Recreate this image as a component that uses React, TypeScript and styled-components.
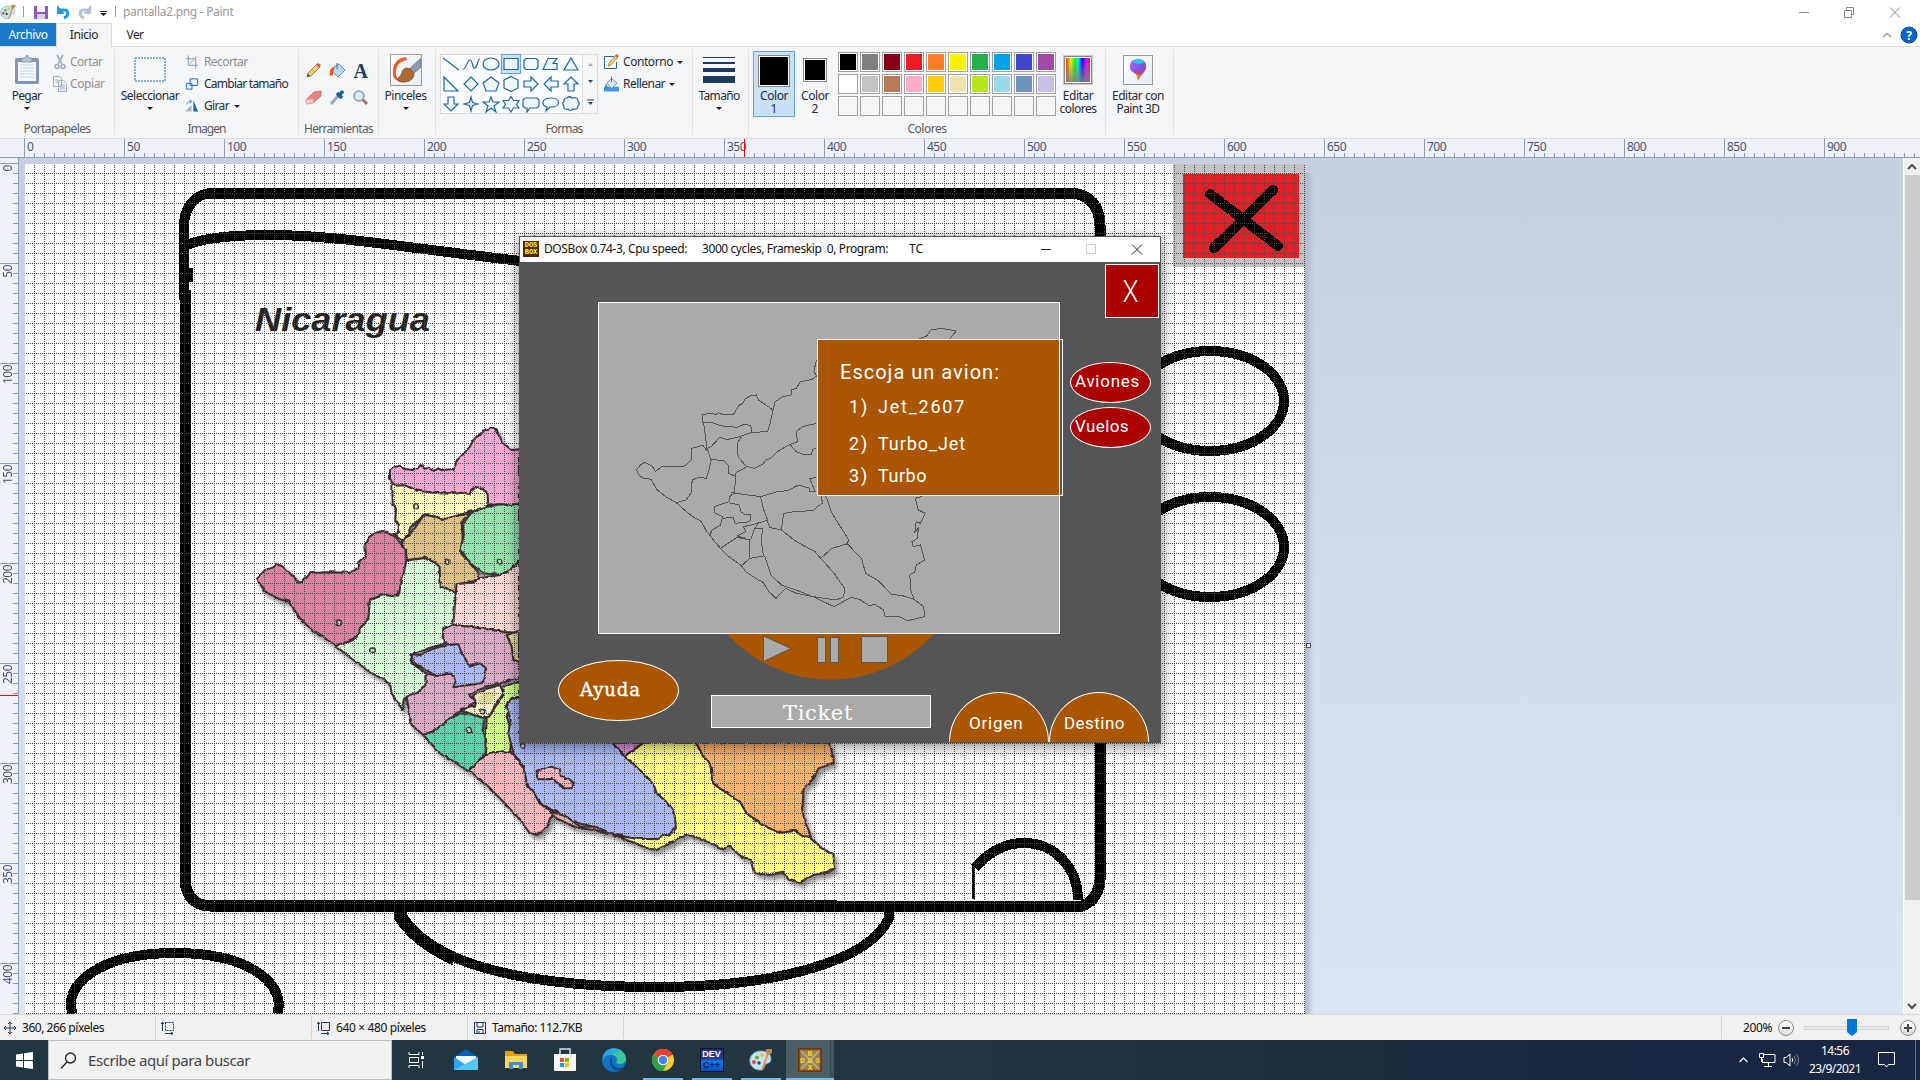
import React, { useLayoutEffect, useRef, useState } from "react";
import styled, { createGlobalStyle, css } from "styled-components";

const Global = createGlobalStyle`
  * { box-sizing: border-box; }
  html, body { margin: 0; padding: 0; overflow: hidden; }
  body { font: 12px/16px "Noto Sans", "Open Sans", sans-serif; color: #262b38; }
  svg { display: block; flex: none; }
`;

/* Spreads or tightens a label so that it takes exactly the given width. */
const FitBox = styled.span`
  display: inline-block;
  white-space: pre;
  flex: none;
`;
const Fit = ({ w, children }: { w: number; children: string }) => {
  const ref = useRef<HTMLSpanElement>(null);
  const [gap, setGap] = useState(0);
  useLayoutEffect(() => {
    if (ref.current) setGap((w + 1 - ref.current.getBoundingClientRect().width) / children.length);
  }, [w, children]);
  return <FitBox ref={ref} style={{ letterSpacing: gap }}>{children}</FitBox>;
};

const App_ = styled.div`
  position: relative;
  width: 1920px;
  height: 1080px;
  display: flex;
  flex-direction: column;
  background: #fff;
  overflow: hidden;
`;

/* ---------- title bar and tabs ---------- */
const TitleBar = styled.div`
  height: 23px;
  display: flex;
  align-items: center;
  color: #999;
`;
const QuickAccess = styled.div`
  width: 123px;
  height: 23px;
  display: flex;
  align-items: center;
`;
const Spacer = styled.div`flex: 1;`;
const TabBar = styled.div`
  height: 24px;
  display: flex;
  align-items: center;
  border-bottom: 1px solid #dadbdc;
  color: #222;
`;
const Tab = styled.div<{ $w: number; $kind?: "file" | "active" }>`
  width: ${(p) => p.$w}px;
  height: 24px;
  display: flex;
  justify-content: center;
  align-items: center;
  ${(p) => p.$kind === "file" && css`height: 23px; align-self: flex-start; background: #1979ca; color: #fff;`}
  ${(p) => p.$kind === "active" && css`background: #f5f6f7; border: 1px solid #dadbdc; border-bottom: 0;`}
`;

/* ---------- ribbon ---------- */
const Ribbon = styled.div`
  height: 92px;
  display: flex;
  padding: 2px 0 3px;
  background: #f5f6f7;
  border-bottom: 1px solid #dadbdc;
`;
const Group = styled.div<{ $w: number }>`
  width: ${(p) => p.$w}px;
  border-right: 1px solid #e2e3e4;
  display: flex;
  flex-direction: column;
`;
const GroupBody = styled.div<{ $l?: number }>`
  height: 72px;
  display: flex;
  padding-left: ${(p) => p.$l ?? 0}px;
`;
const GroupLabel = styled.div`
  height: 14px;
  line-height: 14px;
  padding-top: 1px;
  color: #5c5c5c;
  text-align: center;
`;
const Big = styled.div<{ $w: number; $on?: boolean; $l?: number }>`
  width: ${(p) => p.$w}px;
  height: ${(p) => (p.$on ? 66 : 70)}px;
  margin-top: ${(p) => (p.$on ? 2 : 0)}px;
  margin-left: ${(p) => p.$l ?? 0}px;
  padding-top: ${(p) => (p.$on ? 0 : 2)}px;
  display: flex;
  flex-direction: column;
  align-items: center;
  line-height: 13px;
  ${(p) => p.$on && css`background: #c9e0f7; border: 1px solid #62a2e4; padding-top: 0;`}
`;
const BigIcon = styled.div<{ $h?: number }>`
  height: ${(p) => p.$h ?? 38}px;
  display: flex;
  align-items: center;
`;
const Rows = styled.div<{ $l?: number }>`
  display: flex;
  flex-direction: column;
  padding: 2px 0 0 ${(p) => p.$l ?? 0}px;
`;
const Row = styled.div<{ $off?: boolean; $gap?: number }>`
  height: 22px;
  display: flex;
  align-items: center;
  gap: ${(p) => p.$gap ?? 3}px;
  color: ${(p) => (p.$off ? "#8f8f8f" : "#262b38")};
  svg { opacity: ${(p) => (p.$off ? 0.75 : 1)}; }
`;
const Caret = styled.span<{ $m?: number }>`
  width: 0;
  height: 0;
  margin-top: ${(p) => p.$m ?? 0}px;
  border: 3px solid transparent;
  border-top-color: #1e1e1e;
  border-bottom: 0;
`;
const Tools = styled.div`
  display: grid;
  grid-template-columns: repeat(3, 23.5px);
  grid-template-rows: 27px 27px;
  place-items: center;
  padding-top: 8px;
`;
const Gallery = styled.div`
  width: 158px;
  height: 60px;
  margin-top: 5px;
  display: flex;
  background: #fbfcfd;
  border: 1px solid #d9dbdd;
`;
const ShapeGrid = styled.div`
  display: grid;
  width: 141px;
  grid-template-columns: repeat(7, 20px);
  grid-auto-rows: 20px;
  margin-top: -1px;
`;
const ShapeCell = styled.div<{ $on: boolean }>`
  display: grid;
  place-items: center;
  ${(p) => p.$on && css`background: #c9e0f7; box-shadow: inset 0 0 0 1px #62a2e4;`}
`;
const GalleryScroll = styled.div`
  flex: 1;
  display: flex;
  flex-direction: column;
  justify-content: space-around;
  align-items: center;
  border-left: 1px solid #d9dbdd;
  background: #f6f7f8;
`;
const Bars = styled.div`
  width: 32px;
  display: flex;
  flex-direction: column;
  gap: 4px;
`;
const Bar = styled.div<{ $h: number }>`
  height: ${(p) => p.$h}px;
  background: #1e395b;
`;
const ColorBox = styled.div<{ $s: number }>`
  width: ${(p) => p.$s}px;
  height: ${(p) => p.$s}px;
  background: #000;
  border: 1px solid #868686;
  box-shadow: inset 0 0 0 1px #fff;
`;
const Palette = styled.div`
  display: grid;
  grid-template-columns: repeat(10, 20px);
  grid-auto-rows: 20px;
  gap: 2px;
  padding: 3px 4px 0 5px;
`;
const Swatch = styled.div<{ $c?: string }>`
  border: 1px solid #a0a0a0;
  background: ${(p) => p.$c ?? "#f5f6f7"};
  ${(p) => p.$c && css`box-shadow: inset 0 0 0 1px #fff;`}
`;
const Rainbow = styled.div`
  width: 28px;
  height: 28px;
  border: 1px solid #888;
  outline: 1px solid #ccc;
  box-shadow: inset 0 0 0 1px #fff;
  background: linear-gradient(rgba(128,128,128,0), rgba(128,128,128,.9)), linear-gradient(90deg, #f00, #f80 12%, #ff0 22%, #0f0 38%, #0ff 50%, #00f 66%, #f0f 84%, #f00);
`;
const Framed = styled.div<{ $s: number }>`
  width: ${(p) => p.$s}px;
  height: ${(p) => p.$s}px;
  display: grid;
  place-items: center;
  border: 1px solid #9a9a9a;
  background: linear-gradient(135deg, #fff, #e4ecf0);
`;

/* ---------- rulers and work area ---------- */
const HRuler = styled.div`
  height: 19px;
  flex: none;
  display: flex;
  padding-left: 24px;
  background: #f0f1f8;
  border-bottom: 1px solid #8e9cb4;
  position: relative;
  overflow: hidden;
`;
const HSeg = styled.div`
  flex: none;
  width: 100px;
  height: 18px;
  padding-left: 2px;
  color: #44546f;
  border-left: 1px solid #8e9cb4;
  background: repeating-linear-gradient(90deg, transparent 0 9px, #8e9cb4 9px 10px) 0 14px / 100% 4px no-repeat;
`;
const HMark = styled.div`
  position: absolute;
  left: 744px;
  top: 0;
  width: 1px;
  height: 19px;
  background: #f00;
`;
const Body = styled.div`
  height: 856px;
  flex: none;
  display: flex;
  overflow: hidden;
`;
const VRuler = styled.div`
  width: 19px;
  padding-top: 5px;
  background: #f0f1f8;
  border-right: 1px solid #8e9cb4;
  position: relative;
  overflow: hidden;
`;
const VSeg = styled.div`
  height: 100px;
  width: 18px;
  color: #44546f;
  border-top: 1px solid #8e9cb4;
  background: repeating-linear-gradient(180deg, transparent 0 9px, #8e9cb4 9px 10px) 13px 0 / 5px 100% no-repeat;
`;
const VNum = styled.div`
  writing-mode: vertical-rl;
  transform: rotate(180deg);
  line-height: 16px;
  letter-spacing: -0.5px;
  padding-bottom: 1px;
`;
const VMark = styled(HMark)`
  left: 0;
  top: 537px;
  width: 18px;
  height: 1px;
`;
const Stage = styled.div`
  flex: 1;
  display: flex;
  padding: 6px 0 0 6px;
  background: linear-gradient(#c5cfe0, #dce6f2);
`;
const Edge = styled.div`
  width: 9px;
  margin-top: 9px;
  background: linear-gradient(90deg, #a9b7cd 0, rgba(169,183,205,0));
  display: flex;
  align-items: flex-start;
  padding: 470px 0 0 1px;
`;
const Handle = styled.div`
  width: 5px;
  height: 5px;
  background: #fff;
  border: 1px solid #555;
`;
const Scroll = styled.div`
  width: 17px;
  display: flex;
  flex-direction: column;
  align-items: center;
  justify-content: space-between;
  background: #f0f0f0;
  border-left: 1px solid #fff;
`;
const Thumb = styled.div`
  width: 15px;
  height: 725px;
  margin-bottom: auto;
  background: #cdcdcd;
`;
const ScrollBtn = styled.div`
  height: 17px;
  display: grid;
  place-items: center;
`;

/* ---------- status bar ---------- */
const Status = styled.div`
  height: 26px;
  flex: none;
  display: flex;
  align-items: center;
  background: #f0f0f0;
  border-top: 1px solid #d7d7d7;
  color: #111;
`;
const Cell = styled.div<{ $w: number; $g?: number; $l?: number }>`
  width: ${(p) => p.$w}px;
  height: 23px;
  padding-left: ${(p) => p.$l ?? 4}px;
  display: flex;
  align-items: center;
  gap: ${(p) => p.$g ?? 5}px;
  border-right: 1px solid #d4d4d4;
`;
const Zoom = styled.div`
  width: 199px;
  height: 23px;
  padding-left: 21px;
  display: flex;
  align-items: center;
  border-left: 1px solid #d4d4d4;
`;
const Round = styled.div<{ $l?: number }>`
  width: 16px;
  height: 16px;
  margin-left: ${(p) => p.$l ?? 0}px;
  border-radius: 50%;
  border: 1px solid #888;
  background: linear-gradient(#fff, #ddd);
  display: grid;
  place-items: center;
`;
const Track = styled.div`
  width: 85px;
  height: 4px;
  margin: 0 11px 0 10px;
  padding-left: 42px;
  display: flex;
  align-items: center;
  background: #e7eaea;
  border: 1px solid #d6d6d6;
`;

/* ---------- taskbar ---------- */
const Taskbar = styled.div`
  height: 40px;
  flex: none;
  display: flex;
  align-items: center;
  color: #fff;
  background: linear-gradient(90deg, #21373f 0, #21363f 50%, #1d2d3f 72%, #1a2643 85%, #1a2744);
`;
const Start = styled.div`
  width: 48px;
  display: grid;
  place-items: center;
`;
const Search = styled.div`
  width: 344px;
  height: 40px;
  padding-left: 11px;
  display: flex;
  align-items: center;
  gap: 11px;
  font-size: 15px;
  color: #444;
  background: #f1f1f1;
  border: 1px solid #bfbfbf;
`;
const TaskItem = styled.div<{ $run?: boolean; $on?: boolean; $w?: number }>`
  width: ${(p) => p.$w ?? 49}px;
  height: 40px;
  display: grid;
  place-items: center;
  background: ${(p) => (p.$on ? "linear-gradient(90deg, #4c5f67 0 44px, #35484f 44px 45px, #43565e 45px)" : "none")};
  ${(p) => p.$run && css`
    &::after { content: ""; width: ${p.$on ? 48 : 40}px; height: 2px; background: #76b9ed; align-self: end; grid-area: 1 / 1; }
  `}
  > svg, > div { grid-area: 1 / 1; }
`;
const DevIcon = styled.div`
  width: 24px;
  height: 24px;
  background: linear-gradient(#203070, #2a3f8a 45%, #0b7be8 55%, #0a50c0);
  border: 1px solid #0b1330;
  font: bold 9px/11px "Liberation Sans", sans-serif;
  text-align: center;
  span { display: block; color: #06204c; }
`;
const Tray = styled.div`
  width: 185px;
  height: 40px;
  display: flex;
  align-items: center;
  padding-left: 2px;
`;
const Clock = styled.div`
  width: 64px;
  margin: 0 10px 0 3px;
  display: flex;
  flex-direction: column;
  align-items: center;
  line-height: 18px;
`;
const Peek = styled.div`
  width: 1px;
  height: 40px;
  margin-left: 20px;
  background: #66708a;
`;

/* ---------- DOSBox window ---------- */
const DosWindow = styled.div`
  position: absolute;
  left: 519px;
  top: 236px;
  width: 642px;
  height: 507px;
  border: 1px solid #555;
  background: #555;
  box-shadow: 0 3px 14px 1px rgba(0, 0, 0, 0.45);
`;
const DosTitle = styled.div`
  height: 25px;
  padding: 0 0 1px 3px;
  display: flex;
  align-items: center;
  background: #fff;
  color: #111;
`;
const TitleText = styled.div<{ $l: number }>`margin-left: ${(p) => p.$l}px;`;
const Screen = styled.div`
  width: 640px;
  height: 480px;
  color: #fff;
  font-family: "Roboto", "Lato", sans-serif;
  overflow: hidden;
`;
const TopRow = styled.div`
  height: 372px;
  display: flex;
`;
const MapPanel = styled.div`
  position: relative;
  width: 462px;
  height: 332px;
  margin: 40px 0 0 78px;
  border: 1px solid #fff;
  background: #aaa;
`;
const Popup = styled.div`
  position: absolute;
  left: 218px;
  top: 36px;
  width: 246px;
  height: 157px;
  padding: 20px 0 0 22px;
  border: 1px solid #fff;
  background: linear-gradient(90deg, #a50 0 241px, #fff 241px 242px, #555 242px);
  line-height: 24px;
  font-size: 18px;
`;
const Question = styled.div`
  height: 35px;
  font-size: 20px;
`;
const Option = styled.div<{ $h: number }>`
  height: ${(p) => p.$h}px;
  padding-left: 9px;
  display: flex;
  gap: 9px;
`;
const Side = styled.div`
  width: 100px;
  padding: 2px 1px 0 10px;
  display: flex;
  flex-direction: column;
`;
const CloseBox = styled.div`
  width: 54px;
  height: 54px;
  margin: 0 0 44px 35px;
  padding: 2px 3px 0 0;
  display: grid;
  place-items: center;
  font-size: 31px;
  font-weight: 300;
  background: #a00;
  border: 1px solid #fff;
  span { transform: scaleX(.85); }
`;
const RedOval = styled.div`
  width: 81px;
  height: 41px;
  margin-bottom: 4px;
  padding: 0 0 4px 4px;
  display: flex;
  align-items: center;
  font-size: 17px;
  background: #a00;
  border: 1px solid #fff;
  border-radius: 50%;
`;
const BottomRow = styled.div`
  height: 108px;
  display: flex;
`;
const HelpOval = styled.div`
  width: 121px;
  height: 61px;
  margin: 26px 32px 0 38px;
  padding: 0 0 2px 21px;
  display: flex;
  align-items: center;
  font: 18px "DejaVu Serif", serif;
  -webkit-text-stroke: 0.4px #fff;
  background: #a50;
  border: 1px solid #fff;
  border-radius: 50%;
`;
const Center = styled.div`
  width: 220px;
  margin-right: 18px;
`;
const Ticket = styled.div`
  height: 33px;
  margin-top: 16px;
  padding: 4px 0 0 71px;
  font: 21px/26px "DejaVu Serif", serif;
  background: #aaa;
  border: 1px solid #fff;
`;
const Arch = styled.div<{ $l: number }>`
  width: 100px;
  height: 50px;
  align-self: flex-end;
  padding: 18px 0 0 ${(p) => p.$l}px;
  font-size: 17px;
  line-height: 24px;
  background: #a50;
  border: 1px solid #fff;
  border-bottom: 0;
  border-radius: 50px 50px 0 0 / 50px 50px 0 0;
`;
const DosLogo = styled.div`
  width: 16px;
  height: 16px;
  font: bold 7px/7px "Liberation Mono", monospace;
  text-align: center;
  color: #ff3;
  padding-top: 1px;
  background: #522a08;
`;

/* ---------- icons ---------- */
const PaintIcon = ({ s = 18 }: { s?: number }) => (
  <svg width={s} height={s} viewBox="0 0 24 24">
    <path d="M1 14C0 8 5 3 12 3c6 0 10 3 10 8 0 4-3 4-5 5s-1 6-6 6C6 22 2 19 1 14z" fill="#c4e4f4" stroke="#7ba9c4" />
    <circle cx="5" cy="14" r="2" fill="#e2473c" /><circle cx="8" cy="9.500" r="2" fill="#5ab82f" />
    <circle cx="13" cy="7" r="2" fill="#f2c12e" /><circle cx="10" cy="15" r="1.700" fill="#1c4f6b" />
    <path d="M20 5l-6 17-2 1 1-3 5-15z" fill="#e8883c" /><path d="M17 1l6 0 0 4-4 2-2-2z" fill="#b98758" />
  </svg>
);
const Brush = () => (
  <svg width="30" height="30" viewBox="0 0 30 30">
    <path d="M15 2C5 3 1 10 2 20c1 5 5 7 9 6-7-2-7-9-5-14 2-4 5-6 10-7z" fill="#e5602a" />
    <path d="M30 3v9l-9 8-5-4z" fill="#8c9ab0" stroke="#4e5a70" strokeWidth=".6" />
    <path d="M15 13c4 0 7 3 8 6 0 5-5 9-13 8-4-1-4-3-2-5 3-1 2-8 7-9z" fill="#ad6b32" stroke="#704018" strokeWidth=".6" />
  </svg>
);
const blue = { fill: "none", stroke: "#1e66a5", strokeWidth: 1.2 };
const SHAPES = [
  "M1 3L17 15", "M1 14C4 15 5 5 8 5c3 0 2 9 5 8 3-1 2-9 5-9", "M1 9a8 6 0 1 0 16 0a8 6 0 1 0-16 0", "M2 3.500H16V14.500H2z",
  "M4 3.500h10l2 2v7l-2 2H4l-2-2v-7z", "M6 3.500h9l-4 5h4v6H1z", "M9 3l7 12H2z",
  "M2 2v14h14z", "M9 2l7 7-7 7-7-7z", "M9 2l8 6-3 8H4L1 8z", "M9 1.500l7 3.500v8l-7 3.500L2 13V5z", "M2 6h7V2l7 7-7 7v-4H2z", "M16 6H9V2L2 9l7 7v-4h7z", "M6 16V9H2l7-7 7 7h-4v7z",
  "M6 2v7H2l7 7 7-7h-4V2z", "M9 2l1.500 5.500 5.500 1.500-5.500 1.500L9 16l-1.500-5.500L2 9l5.500-1.500z", "M9 2l2 5h6l-5 4 2 6-5-4-5 4 2-6-5-4h6z", "M9 1.500l2.500 4H17L14.500 9.500 17 13h-5.500L9 17l-2.500-4H1l2.500-3.500L1 5.500h5.500z",
  "M3 3h12l2 2v6l-2 2H8l-3 4v-4H3l-2-2V5z", "M9 3c10 0 10 9 0 9H8l-4 4 1-4C-1 11-1 3 9 3z", "M5 3c2-2 4-1 5 0 3-1 6 0 6 3 2 2 1 4 0 5 0 3-3 4-5 3-2 2-4 2-5 0-3 1-5-1-4-3-2-2-1-4 0-5 0-2 1-3 3-3z",
];
const Pencil = ({ s = 17 }: { s?: number }) => (
  <svg width={s} height={s} viewBox="0 0 17 17"><path d="M2 15l1-4L12 2l3 3-9 9z" fill="#efcc6c" stroke="#80642a" strokeWidth=".7" /><path d="M11 3l2-2 3 2-2 3z" fill="#d4676a" /><path d="M2 15l1-3 2 2z" fill="#333" /></svg>
);
const Bucket = () => (
  <svg width="17" height="17" viewBox="0 0 17 17"><path d="M5 5l5-3 6 6-7 7-5-5z" fill="#b9d9f0" stroke="#4d7ea8" strokeWidth=".8" /><path d="M6 5c-4 0-6 3-5 9l3-1V9z" fill="#e55b2c" /><path d="M8 1v6" stroke="#667" /></svg>
);
const Glyph = styled.span`
  font: bold 20px/20px "Liberation Serif", serif;
  color: #1d3a5f;
`;
const AngleUp = ({ down = false, c = "#505050", w = 10 }: { down?: boolean; c?: string; w?: number }) => (
  <svg width={w} height="8" viewBox="0 0 10 8"><path d={down ? "M1 2l4 4 4-4" : "M1 6l4-4 4 4"} fill="none" stroke={c} strokeWidth={w > 10 ? 1.2 : 2} /></svg>
);
const DosCrate = () => (
  <svg width="24" height="24" viewBox="0 0 24 24">
    <rect width="24" height="24" fill="#6b3510" /><rect x="2" y="2" width="20" height="20" fill="#93845a" stroke="#a85a1c" />
    <path d="M3 3l18 18M21 3L3 21" stroke="#b5a672" strokeWidth="2" />
    <g fontFamily="Liberation Mono" fontWeight="700" fontSize="8" fill="#ffd21c" textAnchor="middle"><text x="12" y="8">B</text><text x="12" y="15" textLength="20">DOS</text><text x="12" y="22">X</text></g>
  </svg>
);

const PALETTE = ["#000", "#7f7f7f", "#880015", "#ed1c24", "#ff7f27", "#fff200", "#22b14c", "#00a2e8", "#3f48cc", "#a349a4", "#fff", "#c3c3c3", "#b97a57", "#ffaec9", "#ffc90e", "#efe4b0", "#b5e61d", "#99d9ea", "#7092be", "#c8bfe7"];

/* ---------- the open picture ---------- */
const REGIONS: [string, string][] = [
  ["#f7a6d4", "M450 210L462 203 480 197 495 207 520 210 533 208 545 195 556 206 570 204 582 213 595 205 610 213 640 210 652 180 672 160 690 140 700 120 718 108 730 95 755 85 770 88 775 103 790 130 815 150 840 148V318L815 320 780 312 745 318 740 275 710 262 690 285 640 280 550 278 510 262 460 255 450 235Z"],
  ["#fdfdb8", "M457 258L495 256 530 272 600 280 640 282 665 278 690 285 700 266 715 262 742 275 745 318 735 327 690 335 640 350 610 360 575 348 550 345 530 368 515 380 505 405 490 422 465 405 478 395 475 370 466 365 468 330 458 310Z"],
  ["#e0c080", "M552 345L575 348 605 360 635 352 690 338 665 370 668 420 663 460 690 490 715 520 718 540 680 548 655 552 645 580 620 565 600 560 598 500 585 488 555 474 500 480 498 450 485 425 510 405Z"],
  ["#90e6a8", "M745 320L790 312 815 318 840 312V480L815 510 780 525 730 520 690 490 662 450 672 405 668 375 700 335Z"],
  ["#e080a0", "M52 540L60 528 75 510 98 503 110 493 125 498 150 520 175 548 190 545 210 520 260 517 335 518 355 508 358 490 378 470 376 440 388 410 410 398 430 393 445 400 465 408 497 450 500 490 485 545 475 590 430 585 390 600 385 660 365 680 352 715 290 738 215 690 180 655 160 625 150 605 120 598 75 575Z"],
  ["#d4ffd4", "M500 482L555 474 585 488 598 500 602 560 625 567 650 580 645 640 640 675 610 690 612 712 622 730 580 740 515 765 515 790 560 820 560 850 540 875 495 900 488 930 455 880 450 850 400 822 340 780 290 740 352 715 365 680 385 660 390 600 430 585 475 590 485 545Z"],
  ["#fcd6d2", "M650 552L700 548 718 535 780 525 815 510 840 480V700L800 697 690 680 640 675Z"],
  ["#dca8c4", "M610 690L640 675 690 680 800 697 840 700V835L780 850 720 868 690 885 708 905 690 920 660 935 620 965 590 990 550 1005 515 975 500 890 540 875 560 850 560 820 590 828 635 820 620 730 608 712Z"],
  ["#dcd890", "M800 705L840 692V790L820 780 815 740Z"],
  ["#a9b9fb", "M515 765L540 768 570 750 600 740 655 732 665 760 675 775 690 800 720 790 738 805 735 835 725 850 640 862 648 840 635 820 590 828 550 805 520 790Z"],
  ["#f8efc4", "M700 890L740 868 780 855 790 880 770 910 745 955 690 945 662 930 705 920 708 905Z"],
  ["#ccff80", "M790 860L840 845V895L815 900 800 950 815 1000 810 1060 770 1058 735 1068 740 960 765 925 790 885Z"],
  ["#58d4a8", "M550 1005L590 990 620 965 660 940 700 945 735 955 728 990 740 1030 738 1060 715 1085 690 1115 640 1085 600 1060Z"],
  ["#aab9fc", "M840 890L812 898 800 920 812 960 805 1000 820 1060 850 1100 860 1150 885 1180 905 1215 950 1235 1000 1265 1060 1280 1100 1300 1190 1316 1250 1318 1290 1305 1308 1285 1303 1235 1285 1210 1250 1180 1240 1150 1210 1120 1195 1100 1155 1070 1140 1050 1120 1028 840 1000Z"],
  ["#fcb4b8", "M690 1112L715 1085 740 1065 775 1055 815 1060 850 1100 860 1150 885 1180 905 1215 950 1240 930 1255 922 1280 895 1305 870 1300 830 1248 780 1195Z"],
  ["#e2b0ac", "M930 1235L980 1250 1020 1280 1060 1280 1130 1310 1060 1290 1010 1283 950 1255Z"],
  ["#ffff80", "M1155 1070L1210 1028H1365L1400 1080 1415 1100 1420 1150 1440 1165 1500 1205 1520 1240 1560 1270 1620 1298 1665 1292 1715 1315 1740 1340 1780 1365 1785 1405 1765 1418 1720 1425 1680 1450 1645 1438 1630 1418 1590 1425 1545 1420 1535 1380 1510 1375 1470 1340 1445 1350 1410 1328 1340 1305 1270 1340 1245 1352 1200 1335 1120 1305 1190 1316 1250 1318 1290 1305 1308 1285 1303 1235 1285 1210 1250 1180 1240 1150 1210 1120Z"],
  ["#fcb068", "M1365 1028H1770L1782 1090 1735 1105 1720 1140 1690 1170 1688 1220 1700 1280 1715 1315 1690 1310 1665 1292 1620 1298 1560 1270 1520 1240 1500 1205 1440 1165 1420 1150 1415 1100 1400 1080Z"],
  ["#dc90dc", "M1120 1028H1210L1155 1070Z"],
  ["#fcb4b8", "M893 1115L935 1100 960 1110 962 1130 990 1140 1003 1150 995 1165 970 1165 955 1150 935 1137 895 1138Z"],
];
const TOWNS = [[528, 321], [623, 486], [779, 486], [297, 670], [399, 751], [688, 992], [848, 1038], [730, 935]];

const Picture = () => (
  <svg width="1280" height="850" viewBox="25 164 1280 850">
    <defs>
      <pattern id="grid" x="25" y="164" width="10" height="10" patternUnits="userSpaceOnUse">
        <g fill="#484848" shapeRendering="crispEdges">
          {[0, 2, 4, 6, 8].map((n) => <React.Fragment key={n}><rect x="9" y={n + 1} width="1" height="1" /><rect x={n + 1} y="9" width="1" height="1" /></React.Fragment>)}
        </g>
      </pattern>
      <filter id="rough" x="-5%" y="-5%" width="110%" height="110%">
        <feTurbulence baseFrequency="0.12" numOctaves="2" seed="4" />
        <feDisplacementMap in="SourceGraphic" scale="3" xChannelSelector="R" yChannelSelector="G" result="m" />
        <feDropShadow in="m" dx="3" dy="4" stdDeviation="2.500" floodColor="#000" floodOpacity=".45" />
      </filter>
    </defs>
    <rect x="25" y="164" width="1280" height="850" fill="#fff" />
    <g filter="url(#rough)">
      <g transform="translate(239 399) scale(.33333)" stroke="#3c2c30" strokeWidth="6" strokeLinejoin="round">
        {REGIONS.map(([c, d]) => <path key={d} d={d} fill={c} />)}
        {TOWNS.map(([x, y]) => <circle key={x} cx={x} cy={y} r="7" fill="#bdb" strokeWidth="4" />)}
        <path d="M715 895l30-20 25 0-15 35-30 5z" fill="#dcd890" stroke="none" />
      </g>
    </g>
    <text x="255" y="331" fontFamily="Liberation Sans" fontWeight="700" fontStyle="italic" fontSize="34" fill="#222" textLength="175" lengthAdjust="spacingAndGlyphs">Nicaragua</text>
    <g fill="none" stroke="#000" strokeWidth="10" shapeRendering="crispEdges">
      <path d="M208 193H1072Q1099 196 1100 225V880Q1098 900 1082 906H210Q188 905 185 882V290" strokeWidth="11" />
      <path d="M184 300V222Q188 196 210 193" />
      <path d="M191 268v14" strokeWidth="4" />
      <path d="M187 245C205 237 235 235 271 235C340 235 420 250 530 262" />
      <path d="M400 908V916C430 965 530 987 655 987C780 987 870 960 889 918V908" />
      <path d="M400 908V916C412 935 430 948 455 959" strokeWidth="13" />
      <path d="M73 1014C62 988 95 953 175 953S287 988 277 1014" />
      <ellipse cx="1210" cy="401" rx="74" ry="50" /><ellipse cx="1210" cy="547" rx="74" ry="50" />
      <path d="M975 868C990 850 1008 843 1024 843C1055 843 1078 868 1078 900" />
      <path d="M973 866V899" strokeWidth="3" />
      <path d="M200 902H837" strokeWidth="4" />
    </g>
    <g shapeRendering="crispEdges">
      <rect x="1173" y="164" width="132" height="103" fill="#c3c3c3" /><rect x="1183" y="174" width="116" height="84" fill="#ed1c24" />
      <path d="M1210 194L1278 246M1273 190L1214 248" stroke="#000" strokeWidth="10" strokeLinecap="round" />
    </g>
    <rect x="25" y="164" width="1280" height="850" fill="url(#grid)" />
  </svg>
);

const OutlineMap = () => (
  <svg width="460" height="330" viewBox="0 0 460 330">
    <g transform="translate(-89 -73) scale(.42091 .33333)" fill="none" stroke="#555" shapeRendering="crispEdges">
      {[
        "M973 326L990 318 1000 300 1025 295 1060 303 1045 326",
        "M728 390L722 425 728 438 718 448 690 455 680 475 668 480 668 495 648 500 630 515 625 540 618 580 612 605 575 607 572 588 558 582 540 592 505 588 480 578 457 577 457 555 470 550 490 553 495 548 508 555 530 555 545 525 553 520 558 508 570 498 585 495 590 510 600 518 625 540",
        "M460 578L468 655 478 650 498 622 515 629 545 620 575 607", "M550 620L540 640 542 680 560 708 580 715 600 703 608 690 620 685 635 665 665 643 683 635 680 605 695 590 728 580",
        "M665 643L680 665 700 675 715 675 720 658 728 653",
        "M468 662L458 646 432 655 430 690 415 708 360 710 345 725 338 708 320 697 310 705 300 720 308 738 318 745 335 748 350 780 370 800 395 818 410 835 432 858 455 875 465 900 480 925 500 955 520 980 550 1007 560 1025 590 1050 600 1055 615 1085 632 1105 655 1075",
        "M468 655L478 690 472 725 466 745 448 742 433 750 430 790 418 810 395 818", "M475 688L508 692 518 705 520 730 537 740", "M560 712L537 728 533 788 522 800 520 815 485 830 485 848 505 860 500 885 480 900 475 915",
        "M525 788L595 800 635 785 660 782 685 765 712 775 712 785 725 785 712 745 728 743", "M595 800L603 840 612 870 590 880 555 890 560 905 540 918 560 925", "M520 818L545 825 548 845 560 855 572 853 570 875 535 880 530 862 505 865",
        "M500 955L520 938 540 922 570 930 570 985 550 1007", "M592 875L580 900 572 930", "M585 895L600 897 597 930 602 978 570 985",
        "M605 978L620 1035 645 1065 690 1085 720 1100 775 1110 793 1100 795 1075 770 1030 738 985 725 965 680 935 645 900 618 893 610 870", "M645 898L650 850 675 845 720 842 730 830 742 820 740 797",
        "M750 797L765 850 785 890 805 930 800 942 765 955 738 985", "M800 940L835 985 845 1030 875 1052 905 1092 935 1098 960 1108",
        "M978 800L963 805 970 840 987 850 975 880 965 875 962 905 970 895 968 925 955 935 958 950 975 945 985 990 965 1005 962 1025 950 1035 952 1080 960 1108 983 1130 985 1160 945 1172 925 1160 890 1158 888 1140 865 1122 855 1128 830 1108 810 1102 770 1130 720 1100 680 1090 655 1075",
      ].map((d) => <path key={d} d={d} vectorEffect="non-scaling-stroke" />)}
    </g>
  </svg>
);

const RibbonGroup = ({ w, label, lw = 0, l, children }: { w: number; label?: string; lw?: number; l?: number; children: React.ReactNode }) => (
  <Group $w={w}><GroupBody $l={l}>{children}</GroupBody><GroupLabel>{label && <Fit w={lw}>{label}</Fit>}</GroupLabel></Group>
);

export default function App() {
  return (
    <App_>
      <Global />
      <TitleBar>
        <QuickAccess>
          <PaintIcon s={16} />
          <svg width="107" height="23" viewBox="16 0 107 23" fill="none">
            <path d="M23.500 6v11M115.500 6v11" stroke="#999" />
            <path d="M34 6h14v13H34z" fill="#8a5cb4" /><path d="M37 6h8v6h-8z" fill="#f4f0fa" /><path d="M37 14h8v5h-8z" fill="#dcd0ea" />
            <path d="M60 10h4c5 0 5 6 0 8" stroke="#2297dd" strokeWidth="3" /><path d="M57 5v9h8z" fill="#2297dd" />
            <path d="M88 10h-4c-5 0-5 6 0 8" stroke="#b4c1d3" strokeWidth="3" /><path d="M91 5v9h-8z" fill="#b4c1d3" />
            <path d="M100 11.500h7" stroke="#222" /><path d="M100 13h7l-3.500 3z" fill="#222" />
          </svg>
        </QuickAccess>
        <Fit w={109.5}>pantalla2.png - Paint</Fit>
        <Spacer />
        <svg width="122" height="20" viewBox="1798 0 122 20" fill="none" stroke="#888">
          <path d="M1799 10.500h10M1844.500 8.500h7v7h-7zM1846.500 8v-2.500h7v7h-2M1890 5.500l10 10M1900 5.500l-10 10" />
        </svg>
      </TitleBar>
      <TabBar>
        <Tab $w={56} $kind="file"><Fit w={38}>Archivo</Fit></Tab>
        <Tab $w={56} $kind="active"><Fit w={27.5}>Inicio</Fit></Tab>
        <Tab $w={46}><Fit w={16}>Ver</Fit></Tab>
        <Spacer />
        <svg width="40" height="22" viewBox="0 0 40 22"><path d="M3 13l4-3.500 4 3.500" fill="none" stroke="#999" strokeWidth="1.500" /><circle cx="29" cy="11" r="8" fill="#0a64c8" stroke="#0a4c98" /><text x="29" y="15.500" fontSize="12" fontWeight="700" fill="#fff" textAnchor="middle">?</text></svg>
      </TabBar>
      <Ribbon>
        <RibbonGroup w={115} label="Portapapeles" lw={66}>
          <Big $w={53}>
            <BigIcon><svg width="26" height="32" viewBox="0 0 26 32"><rect x="1" y="4" width="24" height="26" rx="2" fill="#8494b4" /><path d="M4 8h18v19H4z" fill="#f4f8fc" /><path d="M6 11h14M6 14h14M6 17h14M6 20h14M6 23h14" stroke="#c4d2e4" /><path d="M8 8V4h3l2-3 2 3h3v4z" fill="#b8c4d8" stroke="#8494b4" /></svg></BigIcon>
            <Fit w={28.5}>Pegar</Fit><Caret $m={5} />
          </Big>
          <Rows>
            <Row $off><svg width="14" height="16" viewBox="-1 0 14 16" fill="none" stroke="#8494b4" strokeWidth="1.600"><path d="M3 1l5 9M9 1l-5 9" /><circle cx="3" cy="12.500" r="2" /><circle cx="9" cy="12.500" r="2" /></svg><Fit w={31.5}>Cortar</Fit></Row>
            <Row $off><svg width="14" height="16" viewBox="0 0 14 16" fill="#f4f6fa" stroke="#8494b4"><path d="M.5.500h6l2 2v8h-8zM5.500 4.500h5l3 3v8h-8z" /><path d="M7 9h5M7 11h5M7 13h5M2 4h3M2 6h3" /></svg><Fit w={33.5}>Copiar</Fit></Row>
          </Rows>
        </RibbonGroup>
        <RibbonGroup w={184} label="Imagen" lw={37}>
          <Big $w={70}>
            <BigIcon><svg width="32" height="26" viewBox="0 0 32 26"><rect x="1" y="1" width="30" height="23" fill="none" stroke="#1e66a5" strokeDasharray="2 1" /></svg></BigIcon>
            <Fit w={57.5}>Seleccionar</Fit><Caret $m={5} />
          </Big>
          <Rows>
            <Row $off $gap={5}><svg width="14" height="14" viewBox="0 0 15 14" fill="none" stroke="#5c7090"><path d="M1 3.500h10.500V14M3.500 0v10.500H14M5 9l8-8" /></svg><Fit w={42.5}>Recortar</Fit></Row>
            <Row $gap={5}><svg width="14" height="14" viewBox="0 0 15 14" fill="#e8f4fc" stroke="#1e66a5"><path d="M1.500 6.500h6v6h-6zM5.500 1.500h8v7h-8z" /></svg><Fit w={83}>Cambiar tamaño</Fit></Row>
            <Row $gap={5}><svg width="14" height="14" viewBox="0 0 15 14"><path d="M9 1l5 12H9z" fill="#1e66a5" /><path d="M7 6v7H0z" fill="#a8b4c4" /><path d="M2 5c0-2 2-3 5-3M5 0l2 2-2 2" fill="none" stroke="#2a8ae0" /></svg><Fit w={24}>Girar</Fit><Caret /></Row>
          </Rows>
        </RibbonGroup>
        <RibbonGroup w={80} label="Herramientas" lw={68} l={3}>
          <Tools>
            <Pencil /><Bucket /><Glyph>A</Glyph>
            <svg width="17" height="17" viewBox="0 0 17 17"><path d="M1 11l8-8 7-1v5l-8 7-7 1z" fill="#e88484" stroke="#b85c5c" strokeWidth=".7" /><path d="M1 11l7-1v4l-7 1z" fill="#f8c8c4" /></svg>
            <svg width="17" height="17" viewBox="0 0 17 17"><path d="M2 15l7-8" stroke="#9ab" strokeWidth="3" /><path d="M8 4l5 5M9 8l5-6" stroke="#1d5a96" strokeWidth="3.500" /></svg>
            <svg width="17" height="17" viewBox="0 0 17 17"><path d="M10 10l5 5" stroke="#a07850" strokeWidth="3" /><circle cx="7" cy="7" r="5" fill="#d8ecf8" stroke="#8a9cb0" strokeWidth="1.500" /></svg>
          </Tools>
        </RibbonGroup>
        <RibbonGroup w={57}>
          <Big $w={53}><BigIcon><Framed $s={32}><Brush /></Framed></BigIcon><Fit w={41}>Pinceles</Fit><Caret $m={5} /></Big>
        </RibbonGroup>
        <RibbonGroup w={257} label="Formas" lw={36} l={4}>
          <Gallery>
            <ShapeGrid>
              {SHAPES.map((d, i) => <ShapeCell key={d} $on={i === 3}><svg width="18" height="18" viewBox="0 0 18 18"><path d={d} {...blue} fill={i > 1 ? "#eef7fc" : "none"} /></svg></ShapeCell>)}
            </ShapeGrid>
            <GalleryScroll>
              <svg width="7" height="4"><path d="M1 4l2.500-3L6 4z" fill="#aab" /></svg>
              <svg width="7" height="4"><path d="M1 0l2.500 3L6 0z" fill="#345" /></svg>
              <svg width="7" height="7"><path d="M0 1h7" stroke="#345" /><path d="M1 3l2.500 3L6 3z" fill="#345" /></svg>
            </GalleryScroll>
          </Gallery>
          <Rows $l={6}>
            <Row $gap={4}><svg width="15" height="16" viewBox="0 0 15 16"><path d="M10 2.500H.500v12h12V8" fill="#fff" stroke="#1e66a5" /><path d="M4 12l1-3 7-8 2 2-7 8z" fill="#efcc6c" stroke="#80642a" strokeWidth=".6" /><path d="M11 2l2-2 2 2-2 2z" fill="#d4676a" /></svg><Fit w={49}>Contorno</Fit><Caret /></Row>
            <Row $gap={4}><svg width="15" height="16" viewBox="0 0 16 16"><path d="M0 11h16v5H0z" fill="#3f96dc" /><path d="M3 7l5-5 6 5-6 6z" fill="#d4e6f4" stroke="#6a8cac" /><path d="M2 7l-1 6 3-2z" fill="#3f80c0" /><path d="M8 0v6" stroke="#667" /></svg><Fit w={41}>Rellenar</Fit><Caret /></Row>
          </Rows>
        </RibbonGroup>
        <RibbonGroup w={56}>
          <Big $w={52}><BigIcon><Bars><Bar $h={1} /><Bar $h={2} /><Bar $h={4} /><Bar $h={7} /></Bars></BigIcon><Fit w={40}>Tamaño</Fit><Caret $m={5} /></Big>
        </RibbonGroup>
        <RibbonGroup w={357} label="Colores" lw={38} l={4}>
          <Big $w={42} $on><BigIcon $h={37}><ColorBox $s={32} /></BigIcon><Fit w={27}>Color</Fit><span>1</span></Big>
          <Big $w={36} $l={2}><BigIcon><ColorBox $s={24} /></BigIcon><Fit w={27}>Color</Fit><span>2</span></Big>
          <Palette>{Array.from({ length: 30 }, (_, i) => <Swatch key={i} $c={PALETTE[i]} />)}</Palette>
          <Big $w={36}><BigIcon><Rainbow /></BigIcon><Fit w={29.5}>Editar</Fit><Fit w={36}>colores</Fit></Big>
        </RibbonGroup>
        <RibbonGroup w={68}>
          <Big $w={64}>
            <BigIcon><Framed $s={30}><svg width="20" height="24" viewBox="0 0 22 26"><defs><linearGradient id="p3" x1="0" y1="0" x2="1" y2="1"><stop offset="0" stopColor="#d060e8" /><stop offset=".5" stopColor="#7458e0" /><stop offset="1" stopColor="#e02858" /></linearGradient></defs><path d="M11 1c6 0 9 4 9 8 0 7-7 9-8 15-2-3-1-5-3-7C4 15 2 13 2 9c0-4 3-8 9-8z" fill="url(#p3)" /><path d="M5 4c4-4 9-4 13 0-3 3-9 3-13 0z" fill="#26c8f0" /><path d="M3 12c4 5 10 5 15 1l-4 5H9z" fill="#e83468" /><path d="M9 18h4l-2 7z" fill="#f08c20" /></svg></Framed></BigIcon>
            <Fit w={51}>Editar con</Fit><Fit w={42}>Paint 3D</Fit>
          </Big>
        </RibbonGroup>
      </Ribbon>
      <HRuler>{Array.from({ length: 19 }, (_, i) => <HSeg key={i}><Fit w={i ? (i > 1 ? 18 : 12) : 6}>{String(i * 50)}</Fit></HSeg>)}<HMark /></HRuler>
      <Body>
        <VRuler>{Array.from({ length: 9 }, (_, i) => <VSeg key={i}><VNum>{i * 50}</VNum></VSeg>)}<VMark /></VRuler>
        <Stage><Picture /><Edge><Handle /></Edge></Stage>
        <Scroll><ScrollBtn><AngleUp /></ScrollBtn><Thumb /><ScrollBtn><AngleUp down /></ScrollBtn></Scroll>
      </Body>
      <Status>
        <Cell $w={156} $g={6}><svg width="12" height="12" viewBox="0 0 12 12" fill="none" stroke="#1e395b"><path d="M6 0v12M0 6h12M4 2l2-2 2 2M4 10l2 2 2-2M2 4L0 6l2 2M10 4l2 2-2 2" /></svg><Fit w={81}>360, 266 píxeles</Fit></Cell>
        <Cell $w={156} $g={6}><svg width="16" height="14" viewBox="0 0 16 14" fill="none" stroke="#1e395b"><path d="M2.500 10V1M1 3l1.500-2L4 3M5 12.500h8M11 11l2 1.500-2 1.500" /><rect x="5.500" y="1.500" width="8" height="8" strokeDasharray="2 1" /></svg></Cell>
        <Cell $w={156} $l={5}><svg width="14" height="14" viewBox="0 0 14 14" fill="none" stroke="#1e395b"><path d="M1.500 10V1M0 3l1.500-2L3 3M4 12.500h8M10 11l2 1.500-2 1.500M4.500 1.500h8v8h-8z" /></svg><Fit w={89}>640 × 480 píxeles</Fit></Cell>
        <Cell $w={156} $g={6} $l={6}><svg width="12" height="12" viewBox="0 0 12 12" fill="none" stroke="#1e395b"><path d="M.5.500h11v11H.500zM3 1v4h6V1M3 11V7.500h6V11M5 9v2" /></svg><Fit w={89}>Tamaño: 112.7KB</Fit></Cell>
        <Spacer />
        <Zoom><Fit w={28}>200%</Fit><Round $l={6}><svg width="8" height="8"><path d="M0 4h8" stroke="#444" strokeWidth="2" /></svg></Round><Track><svg width="10" height="17"><path d="M0 0h10v13l-5 4-5-4z" fill="#0078d7" /></svg></Track><Round><svg width="8" height="8"><path d="M0 4h8M4 0v8" stroke="#444" strokeWidth="2" /></svg></Round></Zoom>
      </Status>
      <Taskbar>
        <Start><svg width="17" height="17" viewBox="0 0 17 17" fill="#fff"><path d="M0 2.500l7-1V8H0zM8 1.300L17 0v8H8zM0 9h7v6.500l-7-1zM8 9h9v8l-9-1.300z" /></svg></Start>
        <Search><svg width="17" height="17" viewBox="0 0 17 17" fill="none" stroke="#222" strokeWidth="1.300"><circle cx="10.500" cy="6" r="5" /><path d="M7 10l-6 6.500" /></svg><Fit w={161}>Escribe aquí para buscar</Fit></Search>
        <TaskItem $w={49}><svg width="17" height="16" viewBox="0 0 17 16" fill="none" stroke="#fff"><path d="M1 0v2.500h10V0M1 16v-2.500h10V16M1.500 5.500h9v5h-9zM14.500 0v3M14.500 9v7" /><path d="M13 4h3v3h-3z" fill="#fff" stroke="none" /></svg></TaskItem>
        <TaskItem $w={50}><svg width="24" height="24" viewBox="0 0 24 24"><path d="M0 9l12-8 12 8v13H0z" fill="#0a5cb4" /><path d="M2 8h20v9H2z" fill="#f4f8fc" /><path d="M0 9l12 8L24 9v13H0z" fill="#2aa4ec" /><path d="M0 22L24 9v13z" fill="#50c8f4" /></svg></TaskItem>
        <TaskItem $w={49}><svg width="22" height="20" viewBox="0 0 22 20"><path d="M0 1h8l2 3h12v14H0z" fill="#e4a010" /><path d="M0 6h22v12H0z" fill="#fcd462" /><path d="M4 19v-7h14v7h-4v-4H8v4z" fill="#3a90dc" /></svg></TaskItem>
        <TaskItem $w={49}><svg width="24" height="24" viewBox="0 0 24 24"><path d="M7 7V1h10v6" fill="none" stroke="#dfe4e8" strokeWidth="1.500" /><path d="M1 6h22v16q0 1-1 1H2q-1 0-1-1z" fill="#f8f8f8" /><path d="M7 10h4v4H7z" fill="#f25022" /><path d="M12 10h4v4h-4z" fill="#7fba00" /><path d="M7 15h4v4H7z" fill="#00a4ef" /><path d="M12 15h4v4h-4z" fill="#ffb900" /></svg></TaskItem>
        <TaskItem $w={49}><svg width="24" height="24" viewBox="0 0 24 24"><circle cx="12" cy="12" r="12" fill="#1272c4" /><path d="M1 9C4-3 22-2 24 10c1 6-7 7-10 5 3-5-1-8-5-8-4 0-7 1-8 5z" fill="#3cc4a0" /><path d="M1 9C4 0 12-1 17 2L9 7c-4 0-7 1-8 5z" fill="#28a8dc" /><path d="M9 9c-3 5 0 13 7 14 3 0 5-2 6-4-5 2-11 1-12-5z" fill="#0c4c90" /></svg></TaskItem>
        <TaskItem $w={49} $run><svg width="22" height="22" viewBox="0 0 24 24"><circle cx="12" cy="12" r="12" fill="#fcc934" /><path d="M12 12L1.600 6A12 12 0 0 1 22.400 6z" fill="#e34133" /><path d="M1.600 6A12 12 0 0 0 12 24l5-9-5-3z" fill="#2f9e4d" /><circle cx="12" cy="12" r="5.800" fill="#fff" /><circle cx="12" cy="12" r="4.600" fill="#4285f4" /></svg></TaskItem>
        <TaskItem $w={49} $run><DevIcon>DEV<span>C++</span></DevIcon></TaskItem>
        <TaskItem $w={50} $run><PaintIcon s={24} /></TaskItem>
        <TaskItem $w={48} $run $on><DosCrate /></TaskItem>
        <Spacer />
        <Tray>
          <AngleUp c="#fff" w={13} />
          <svg width="26" height="14" viewBox="-9 0 26 14" fill="none" stroke="#fff"><path d="M4 1.500h12v8H3.500V6M9.500 10v3M5 13.500h8M.5.500h4v4h-4zM2.500 5v4" /></svg>
          <svg width="24" height="14" viewBox="-7 0 24 14" fill="none" stroke="#fff"><path d="M1 4.500h2l4-3.500v12L3 9.500H1zM9 5q1.500 2 0 4" /><path d="M11 3q3 4 0 8M13.500 1.500q4 5.500 0 11" stroke="#7a8498" /></svg>
          <Clock><Fit w={27}>14:56</Fit><Fit w={51}>23/9/2021</Fit></Clock>
          <svg width="18" height="16" viewBox="-1 0 18 16" fill="none" stroke="#fff"><path d="M.5.500h16v12h-6l-2 2.500-2-2.500h-6z" /></svg>
          <Peek />
        </Tray>
      </Taskbar>

      <DosWindow>
        <DosTitle>
          <DosLogo>DOS<br />BOX</DosLogo>
          <TitleText $l={5}><Fit w={142}>DOSBox 0.74-3, Cpu speed:</Fit></TitleText>
          <TitleText $l={15}><Fit w={185}>3000 cycles, Frameskip  0, Program:</Fit></TitleText>
          <TitleText $l={21}><Fit w={13}>TC</Fit></TitleText>
          <Spacer />
          <svg width="119" height="24" viewBox="0 0 119 24" fill="none" stroke="#222"><path d="M0 12.500h10M91 7.500l10 10M101 7.500l-10 10" /><path d="M45.500 7.500h9v9h-9z" stroke="#ccc" /></svg>
        </DosTitle>
        <Screen>
          <TopRow>
            <MapPanel>
              <OutlineMap />
              <Popup>
                <Question><Fit w={159}>Escoja un avion:</Fit></Question>
                <Option $h={37}><Fit w={19}>1)</Fit><Fit w={87}>Jet_2607</Fit></Option>
                <Option $h={32}><Fit w={19}>2)</Fit><Fit w={87}>Turbo_Jet</Fit></Option>
                <Option $h={24}><Fit w={19}>3)</Fit><Fit w={48}>Turbo</Fit></Option>
              </Popup>
            </MapPanel>
            <Side>
              <CloseBox><span>X</span></CloseBox>
              <RedOval><Fit w={64}>Aviones</Fit></RedOval>
              <RedOval><Fit w={53}>Vuelos</Fit></RedOval>
            </Side>
          </TopRow>
          <BottomRow>
            <HelpOval><Fit w={60}>Ayuda</Fit></HelpOval>
            <Center>
              <svg width="220" height="45" viewBox="191 372 220 45" overflow="visible">
                <path d="M207 372A140 140 0 0 0 414 372z" fill="#a50" />
                <path d="M243.500 374v25.500L271 386.500z M297.500 375.500h8v25h-8z M310.500 375.500h8v25h-8z M341.500 374.500h26v26h-26z" fill="#aaa" stroke="#555" />
              </svg>
              <Ticket><Fit w={69}>Ticket</Fit></Ticket>
            </Center>
            <Arch $l={19}><Fit w={53.5}>Origen</Fit></Arch>
            <Arch $l={14}><Fit w={60}>Destino</Fit></Arch>
          </BottomRow>
        </Screen>
      </DosWindow>
    </App_>
  );
}
